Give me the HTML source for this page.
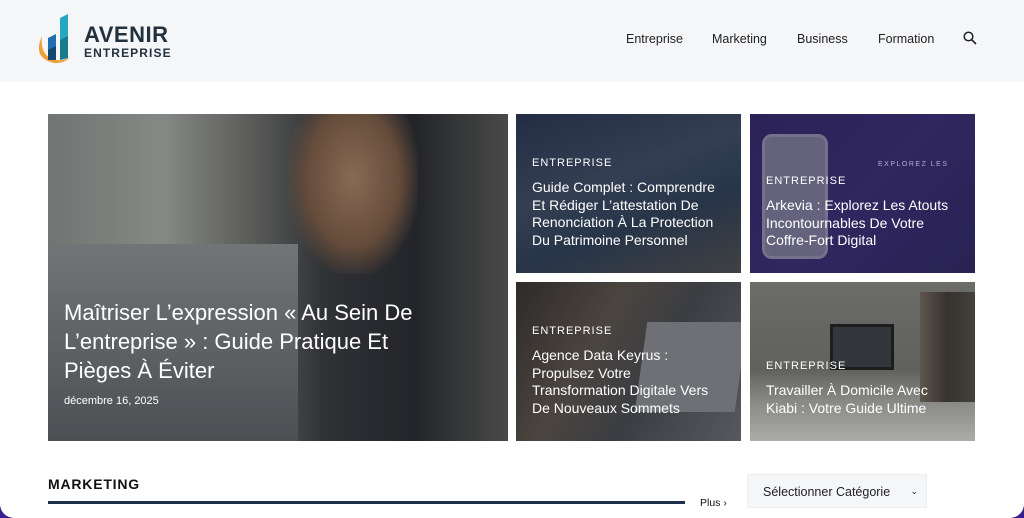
<!DOCTYPE html>
<html><head><meta charset="utf-8"><style>
*{margin:0;padding:0;box-sizing:border-box}
html,body{width:1024px;height:518px;overflow:hidden;background:#3b1d8f}
.page{position:absolute;left:0;top:0;width:1024px;height:518px;background:#fff;border-radius:0 0 14px 14px;overflow:hidden;font-family:"Liberation Sans",Arial,sans-serif}
header{position:absolute;left:0;top:0;width:1024px;height:82px;background:#f5f6f8}
.nav{position:absolute;top:32px;font-size:12.5px;color:#222}
.tile{position:absolute;overflow:hidden;color:#fff}
.tile .lab{position:absolute;left:16px;font-size:11px;letter-spacing:1px}
.tile .t{position:absolute;left:16px;font-size:14px;line-height:17.5px;width:190px}
</style></head><body><div class="page">
<header>
<svg style="position:absolute;left:36px;top:14px" width="40" height="52" viewBox="0 0 40 52">
<path d="M6 22 Q-4 44 18 49 Q28 50 34 43 Q24 49 14 44 Q4 38 6 22Z" fill="#f0a03a"/>
<path d="M12 24 L20 20 L20 46 L12 46Z" fill="#1f6fb0"/>
<path d="M12 36 L20 32 L20 46 L12 46Z" fill="#15466f"/>
<path d="M24 4 L32 0 L32 44 L24 46Z" fill="#27a7bd"/>
<path d="M24 26 L32 22 L32 44 L24 46Z" fill="#1a7b8f"/>
</svg>
<div style="position:absolute;left:84px;top:22px;font-size:22px;font-weight:bold;color:#23313f;letter-spacing:.5px">AVENIR</div>
<div style="position:absolute;left:84px;top:46px;font-size:12px;font-weight:bold;color:#23313f;letter-spacing:1.1px">ENTREPRISE</div>
<div class="nav" style="left:626px">Entreprise</div>
<div class="nav" style="left:712px">Marketing</div>
<div class="nav" style="left:797px">Business</div>
<div class="nav" style="left:878px">Formation</div>
<svg style="position:absolute;left:963px;top:31px" width="14" height="14" viewBox="0 0 14 14"><circle cx="5.5" cy="5.5" r="4.3" fill="none" stroke="#222" stroke-width="1.5"/><path d="M8.7 8.7L13 13" stroke="#222" stroke-width="1.6"/></svg>
</header>

<div class="tile" style="left:48px;top:114px;width:460px;height:327px;background:linear-gradient(90deg,#8a8f8c 0%,#a3a7a3 25%,#6d6e6c 45%,#3b3d42 60%,#2b2d33 80%,#5a5b58 100%)">
<div style="position:absolute;left:0;top:130px;width:250px;height:197px;background:linear-gradient(180deg,#8b8f92,#5d6266)"></div>
<div style="position:absolute;left:240px;top:0;width:130px;height:160px;background:radial-gradient(ellipse at 50% 40%,#a68368 0%,#7c5d48 50%,transparent 75%)"></div>
<div style="position:absolute;left:0;top:0;right:0;bottom:0;background:rgba(0,0,0,.18)"></div>
<div style="position:absolute;left:16px;top:184px;font-size:22px;line-height:29px;width:395px">Maîtriser L’expression « Au Sein De L’entreprise » : Guide Pratique Et Pièges À Éviter</div>
<div style="position:absolute;left:16px;top:281px;font-size:11px">décembre 16, 2025</div>
</div>

<div class="tile" style="left:516px;top:114px;width:225px;height:159px;background:linear-gradient(160deg,#2a3550 0%,#3d4a62 40%,#2f3e55 65%,#4b4d50 100%)">
<div style="position:absolute;left:0;top:0;right:0;bottom:0;background:rgba(0,0,0,.15)"></div>
<div class="lab" style="top:43px">ENTREPRISE</div>
<div class="t" style="top:65px">Guide Complet : Comprendre Et Rédiger L’attestation De Renonciation À La Protection Du Patrimoine Personnel</div>
</div>

<div class="tile" style="left:750px;top:114px;width:225px;height:159px;background:linear-gradient(135deg,#332a64 0%,#3a3070 50%,#302a5c 100%)">
<div style="position:absolute;left:12px;top:20px;width:66px;height:125px;border-radius:10px;background:#7f7f95;border:3px solid #9595a8"></div>
<div style="position:absolute;left:0;top:0;right:0;bottom:0;background:rgba(20,10,50,.25)"></div>
<div style="position:absolute;left:128px;top:47px;font-size:7px;letter-spacing:1.5px;color:#b5b0cf">EXPLOREZ LES</div>
<div class="lab" style="top:61px">ENTREPRISE</div>
<div class="t" style="top:83px">Arkevia : Explorez Les Atouts Incontournables De Votre Coffre-Fort Digital</div>
</div>

<div class="tile" style="left:516px;top:282px;width:225px;height:159px;background:linear-gradient(120deg,#3a3633 0%,#5e5650 35%,#4a4d53 60%,#6c7076 100%)">
<div style="position:absolute;left:125px;top:40px;width:100px;height:90px;background:#8a8d93;transform:skewX(-8deg)"></div>
<div style="position:absolute;left:0;top:0;right:0;bottom:0;background:rgba(0,0,0,.2)"></div>
<div class="lab" style="top:43px">ENTREPRISE</div>
<div class="t" style="top:65px;width:180px">Agence Data Keyrus : Propulsez Votre Transformation Digitale Vers De Nouveaux Sommets</div>
</div>

<div class="tile" style="left:750px;top:282px;width:225px;height:159px;background:linear-gradient(180deg,#7b7c78 0%,#6e6f6b 55%,#9c9c98 75%,#c3c3c0 100%)">
<div style="position:absolute;left:80px;top:42px;width:64px;height:46px;background:#3b3e42;border:3px solid #222"></div>
<div style="position:absolute;left:170px;top:10px;width:55px;height:110px;background:linear-gradient(90deg,#6c6358,#3e3a36,#4e4b44)"></div>
<div style="position:absolute;left:0;top:0;right:0;bottom:0;background:rgba(0,0,0,.12)"></div>
<div class="lab" style="top:78px">ENTREPRISE</div>
<div class="t" style="top:100px">Travailler À Domicile Avec Kiabi : Votre Guide Ultime</div>
</div>

<div style="position:absolute;left:48px;top:476px;font-size:14px;font-weight:bold;letter-spacing:.8px;color:#111">MARKETING</div>
<div style="position:absolute;left:48px;top:501px;width:637px;height:3px;background:#1d2f48"></div>
<div style="position:absolute;left:700px;top:497px;font-size:10.5px;color:#111">Plus ›</div>
<div style="position:absolute;left:747px;top:474px;width:180px;height:34px;background:#f5f6f8;border:1px solid #eceef0;font-size:12.5px;color:#222;padding:10px 0 0 15px">Sélectionner Catégorie<span style="position:absolute;right:8px;top:11px;font-size:9px">⌄</span></div>
</div></body></html>
